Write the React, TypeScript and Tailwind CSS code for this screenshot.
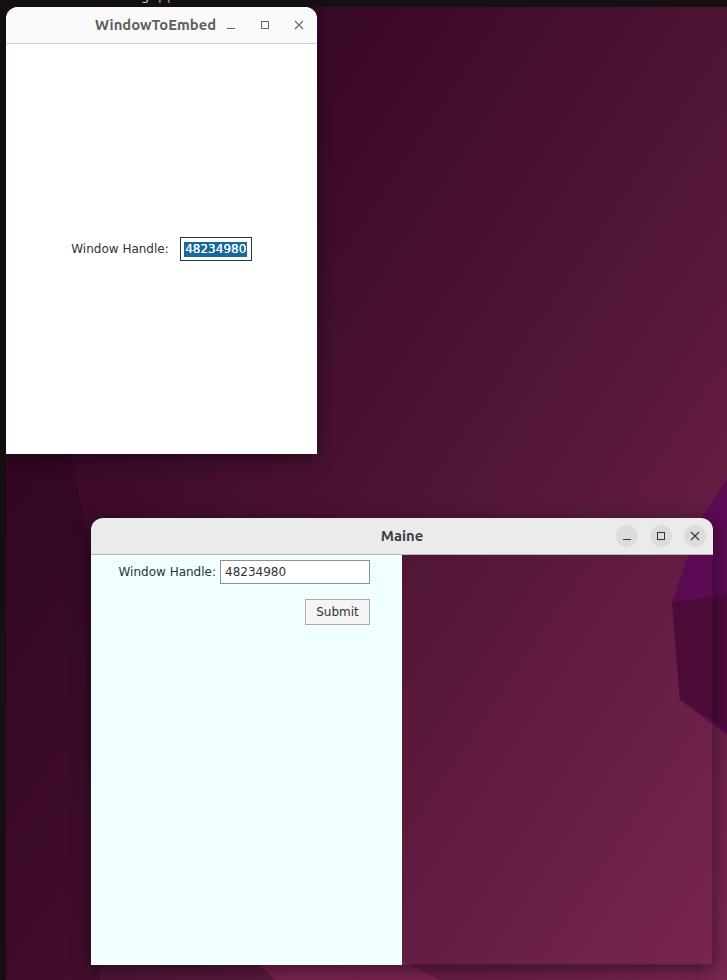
function Minimize({ className }: { className: string }) {
  return (
    <svg width="16" height="16" viewBox="0 0 16 16" className={className}>
      <rect x="4" y="11" width="8" height="1" fill="currentColor" />
    </svg>
  );
}

function Maximize({ className }: { className: string }) {
  return (
    <svg width="16" height="16" viewBox="0 0 16 16" className={className}>
      <rect x="4.5" y="4.5" width="7" height="7" fill="none" stroke="currentColor" />
    </svg>
  );
}

function Close({ className }: { className: string }) {
  return (
    <svg width="16" height="16" viewBox="0 0 16 16" className={className}>
      <path d="M4 4l8 8M12 4l-8 8" fill="none" stroke="currentColor" strokeWidth="1.1" />
    </svg>
  );
}

function Wallpaper() {
  return (
    <svg viewBox="0 0 727 980" width="727" height="980" className="absolute inset-0">
      <polygon points="6,440 68,440 100,600 100,980 6,980" fill="#24031b" fillOpacity="0.3" />
      <polygon points="727,478 700,520 672,602 680,700 727,735" fill="#5c0a52" />
      <polygon points="672,602 727,595 727,730 680,700" fill="#4d0c38" />
      <polygon points="255,960 400,960 440,980 275,980" fill="#8a2a5e" fillOpacity="0.6" />
    </svg>
  );
}

export default function App() {
  return (
    <div className="relative w-[727px] h-[980px] overflow-hidden bg-[linear-gradient(124deg,#2a0520_0%,#3c0a2b_30%,#521636_58%,#7a2652_100%)] font-['DejaVu_Sans',sans-serif]">
      <Wallpaper />

      {/* top bar and dock edge */}
      <div className="absolute top-0 left-0 w-full h-[7px] bg-[#151113] overflow-hidden text-[13px] leading-[13px]">
        <span className="absolute left-[141px] top-[-11px] text-[#dddddd]">g</span>
        <span className="absolute left-[158px] top-[-11px] text-[#e8a860]">p</span>
        <span className="absolute left-[167px] top-[-11px] text-[#7fb4e8]">p</span>
      </div>
      <div className="absolute top-[7px] left-0 w-[6px] h-[973px] bg-[#170f13]" />

      {/* embedded window */}
      <div className="absolute left-[6px] top-[7px] w-[311px] h-[447px] flex flex-col bg-white rounded-t-[12px] shadow-[0_4px_18px_rgba(0,0,0,0.45)] overflow-hidden">
        <div className="h-[37px] shrink-0 flex items-center bg-[#fafafa] border-b border-[#d0d0d0] relative">
          <span className="ml-[89px] font-['Ubuntu','Open_Sans',sans-serif] font-bold text-[14.8px] text-[#5e5e5e]">WindowToEmbed</span>
          <div className="absolute right-[10px] top-[10px] flex gap-[18px] text-[#666666]">
            <Minimize className="" />
            <Maximize className="" />
            <Close className="" />
          </div>
        </div>
        <div className="flex-1 flex items-center justify-center text-[12px] text-[#2e3436]">
          <span className="mr-[11px]">Window Handle:</span>
          <div className="w-[72px] h-[24px] border border-[#2e3436] flex items-center justify-center">
            <span className="bg-[#15699b] text-white px-px leading-[15px] [text-shadow:0_0_0.6px_white]">48234980</span>
          </div>
        </div>
      </div>

      {/* main window */}
      <div className="absolute left-[91px] top-[518px] w-[622px] h-[447px] flex flex-col rounded-t-[12px] shadow-[0_4px_18px_rgba(0,0,0,0.5)] overflow-hidden">
        <div className="h-[37px] shrink-0 flex items-center justify-center bg-[#ebebeb] border-b border-[#b6b6b6] relative">
          <span className="font-['Ubuntu','Open_Sans',sans-serif] font-bold text-[14.8px] text-[#3d3d3d]">Maine</span>
          <div className="absolute right-[7px] top-[7px] flex gap-[12px] text-[#333333]">
            <div className="w-[22px] h-[22px] rounded-full bg-[#dcdcdc] flex items-center justify-center"><Minimize className="" /></div>
            <div className="w-[22px] h-[22px] rounded-full bg-[#dcdcdc] flex items-center justify-center"><Maximize className="" /></div>
            <div className="w-[22px] h-[22px] rounded-full bg-[#dcdcdc] flex items-center justify-center"><Close className="" /></div>
          </div>
        </div>
        <div className="flex-1 flex">
          <div className="w-[311px] bg-[#f0ffff] text-[12px] text-[#2e3436] flex flex-col items-end pr-[32px] pt-[5px]">
            <div className="flex items-center">
              <span className="mr-[4px]">Window Handle:</span>
              <input readOnly value="48234980" className="w-[150px] h-[24px] border border-[#8f8f8f] bg-white px-[4px] outline-none" />
            </div>
            <button className="mt-[15px] w-[65px] h-[26px] border border-[#ababab] bg-[#f5f5f5]">Submit</button>
          </div>
          <div className="flex-1 border-r border-b border-[#3d1030]/40" />
        </div>
      </div>
    </div>
  );
}
